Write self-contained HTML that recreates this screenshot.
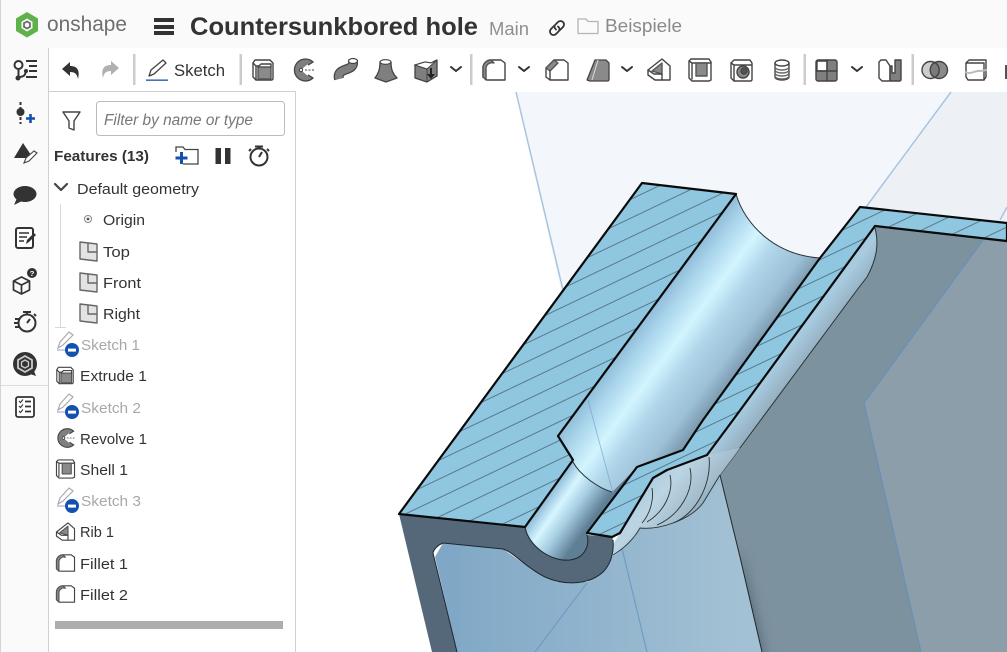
<!DOCTYPE html>
<html><head><meta charset="utf-8"><title>Countersunkbored hole</title>
<style>
html,body{margin:0;padding:0;background:#fff;width:1007px;height:652px;overflow:hidden}
svg{display:block;position:absolute;left:0;top:0;filter:blur(.3px)}
text{font-family:"Liberation Sans",sans-serif;fill:#333}
.f{font-size:15px}
.g{fill:#a8a8a8}
.ic{fill:none;stroke:#444;stroke-width:1.4;stroke-linejoin:round;stroke-linecap:round}
</style></head><body>
<svg width="1007" height="652" viewBox="0 0 1007 652" xmlns="http://www.w3.org/2000/svg">
<defs>
<filter id="soft" x="-100%" y="-30%" width="300%" height="160%"><feGaussianBlur stdDeviation="7"/></filter>
<pattern id="hatch" width="60" height="17" patternUnits="userSpaceOnUse" patternTransform="translate(400 516) rotate(-25.5)">
<rect width="60" height="17" fill="#8fc6e0"/><line x1="0" y1="0.5" x2="60" y2="0.5" stroke="#47606e" stroke-width=".8"/>
</pattern>
<linearGradient id="big" gradientUnits="userSpaceOnUse" x1="736" y1="194" x2="821" y2="257">
<stop offset="0" stop-color="#8fbcd8"/><stop offset=".14" stop-color="#a8d3ea"/><stop offset=".38" stop-color="#d2f5ff"/><stop offset=".58" stop-color="#b0d6ea"/><stop offset=".85" stop-color="#9cc0d6"/><stop offset="1" stop-color="#7f9eb4"/>
</linearGradient>
<linearGradient id="small" gradientUnits="userSpaceOnUse" x1="573" y1="460" x2="614" y2="489">
<stop offset="0" stop-color="#8fbcd8"/><stop offset=".3" stop-color="#d6f6ff"/><stop offset=".6" stop-color="#a6cde2"/><stop offset="1" stop-color="#5f7f95"/>
</linearGradient>
<linearGradient id="fil" gradientUnits="userSpaceOnUse" x1="790" y1="300" x2="835" y2="335">
<stop offset="0" stop-color="#9cc2da"/><stop offset=".5" stop-color="#a8cbe0"/><stop offset="1" stop-color="#8ea6b6"/>
</linearGradient>
<linearGradient id="ring" gradientUnits="userSpaceOnUse" x1="640" y1="470" x2="700" y2="520">
<stop offset="0" stop-color="#a3c7de"/><stop offset=".4" stop-color="#bcd5e3"/><stop offset=".8" stop-color="#a3bccc"/><stop offset="1" stop-color="#7d98ab"/>
</linearGradient>
<linearGradient id="inner" gradientUnits="userSpaceOnUse" x1="450" y1="600" x2="740" y2="600">
<stop offset="0" stop-color="#80a8c6"/><stop offset=".5" stop-color="#91b4cd"/><stop offset="1" stop-color="#a3c1d4"/>
</linearGradient>

<g id="iExtrude" class="ic"><path d="M-10 -7l2-3h15l3 3v16l-1 1h-16l-3-3z"/><path d="M-10 -7l3 3v14M-7 -4h3"/><rect x="-5" y="-3" width="13" height="12" fill="#8a8a8a" stroke="#555"/><path d="M-5-3l3-3h10v3" /></g>
<g id="iRevolve"><path d="M9-8A11 11 0 1 0 9 8L1 3-3 0 1-3z" fill="#7f7f7f" stroke="#444" stroke-width="1.3"/><circle cx="-3" cy="0" r="1.6" fill="#fff" stroke="#444"/><path d="M-1 -1l5-4M-1 1l5 4M2 0h9" stroke="#fff" stroke-width="1.6"/><path d="M1 0h9" stroke="#444" stroke-dasharray="2 1.5"/></g>
<g id="iFillet" class="ic"><path d="M-11-3a8 8 0 0 1 8-7h10l4 3v17h-18l-4-3z" fill="#fff"/><path d="M-11-3a8 8 0 0 1 8-7l3 3a6 6 0 0 0-8 5v12l-3-3z" fill="#8a8a8a" stroke="#555"/></g>
<g id="iChamfer" class="ic"><path d="M-11-2l8-8h10l4 3v17h-18l-4-3z" fill="#fff"/><path d="M-11-2l8-8 4 3-8 8z" fill="#8a8a8a" stroke="#555"/><path d="M-7 1v9"/></g>
<g id="iShell" class="ic"><path d="M-11-9l2-2h18l2 3v18l-2 1h-17l-3-3z" fill="#fff"/><path d="M-11-9l3 2v16M-8-7h19"/><path d="M-4-7h11v13h-11z" fill="#8a8a8a" stroke="#555"/></g>
<g id="iRib" class="ic"><path d="M-11 0L3-11l8 7V10H-4l-7-5z" fill="#fff"/><path d="M-7 1L3-7V4z" fill="#8a8a8a" stroke="#555"/><path d="M-11 0l6 4h8v6"/></g>
<g id="iPlane" class="ic" style="stroke:#666"><path d="M-9-9l17 2v17l-17-2z" fill="#e3e3e3"/><path d="M-1-8V1h9" /></g>
<g id="iSketchOff">
 <path d="M-9 7l2-6 9-10 4 3-10 10z" fill="#fff" stroke="#aaa" stroke-width="1.2"/><line x1="-10" y1="9" x2="3" y2="9" stroke="#9db4da" stroke-width="1.2"/>
 <circle cx="5" cy="9" r="7" fill="#1450b0"/><rect x="1" y="7.6" width="8" height="3" fill="#fff"/>
</g>
</defs>

<rect width="1007" height="48" fill="#fafafa"/>
<rect x="0" y="48" width="49" height="604" fill="#fafafa"/>
<rect x="0" y="0" width="1" height="652" fill="#d4d4d4"/>
<rect x="48" y="48" width="1" height="604" fill="#d0d0d0"/>
<rect x="1" y="385" width="47" height="1" fill="#dcdcdc"/>

<!-- logo -->
<path d="M27 12L38 18.500V31L27 37.500 16 31V18.500z" fill="#5fb14a"/>
<path d="M27 18.500l5.500 3.200v6.400L27 31.500l-5.500-3.400v-6.400z" fill="#fafafa"/>
<path d="M27 21.500l3 1.700v3.600L27 28.500l-3-1.700v-3.600z" fill="none" stroke="#6d6d6d" stroke-width="1.800"/>
<text x="47" y="31" font-size="21" textLength="80" lengthAdjust="spacingAndGlyphs" style="fill:#6e6e6e">onshape</text>

<path d="M154 18h20v4h-20zM154 25h20v4h-20zM154 31h20v4h-20z" fill="#333"/>
<text x="190" y="35" font-size="25" font-weight="700" textLength="288" lengthAdjust="spacingAndGlyphs">Countersunkbored hole</text>
<text x="489" y="35" font-size="18" textLength="40" lengthAdjust="spacingAndGlyphs" style="fill:#8f8f8f">Main</text>
<g fill="none" stroke="#333" stroke-width="1.800" stroke-linecap="round"><path d="M554 26l-3 3a3.500 3.500 0 0 0 5 5l3-3a3.500 3.500 0 0 0-1-4.500"/><path d="M560 30l3-3a3.500 3.500 0 0 0-5-5l-3 3a3.500 3.500 0 0 0 1 4.500"/></g>
<path d="M578 33.500V19h8l2 2.500h10V33.500z" fill="none" stroke="#b4b4b4" stroke-width="1.300"/>
<text x="605" y="32" font-size="18" textLength="77" lengthAdjust="spacingAndGlyphs" style="fill:#8a8a8a">Beispiele</text>

<!-- toolbar -->
<path d="M62 69l8-7v4c8 0 10 5 8 13-1-5-3-7-8-7v4z" fill="#333"/>
<path d="M119 68l-8-7v4c-8 0-10 5-8 13 1-5 3-7 8-7v4z" fill="#b0b0b0"/>
<g fill="#ccc"><rect x="133" y="54" width="2.500" height="31"/><rect x="239.500" y="54" width="2.500" height="31"/><rect x="470" y="54" width="2.500" height="31"/><rect x="803.500" y="54" width="2.500" height="31"/><rect x="911.500" y="54" width="2.500" height="31"/></g>
<path d="M149 76l2-6 12-10 3 3-12 11z" fill="#fff" stroke="#444" stroke-width="1.300" stroke-linejoin="round"/><path d="M149 76l3-1" stroke="#444"/>
<rect x="146" y="79.500" width="22" height="1.300" fill="#1450b0"/>
<text x="174" y="76" font-size="16.500" textLength="51" lengthAdjust="spacingAndGlyphs">Sketch</text>

<use href="#iExtrude" x="263" y="70"/>
<use href="#iRevolve" x="304" y="70"/>
<path d="M339 79c-3-12 15-7 14-17" fill="none" stroke="#444" stroke-width="10" stroke-linecap="butt"/>
<path d="M339 79c-3-12 15-7 14-17" fill="none" stroke="#7f7f7f" stroke-width="7.500"/>
<ellipse cx="353" cy="61" rx="4.500" ry="2.500" fill="#fff" stroke="#444" stroke-width="1.200"/>
<path d="M380 62C380 70 378 74 375 78L386 82 397 78C393 74 391 70 391 62z" fill="#7f7f7f" stroke="#444" stroke-width="1.300" stroke-linejoin="round"/><ellipse cx="385.500" cy="62" rx="5.500" ry="2.300" fill="#fff" stroke="#444" stroke-width="1.200"/>
<path d="M415 65l10-3 6 1 6-3v16l-10 6-12-4z" fill="#7f7f7f" stroke="#444" stroke-width="1.300" stroke-linejoin="round"/><path d="M415 65l12 4v13" fill="none" stroke="#444"/><path d="M415 65l10-3 6 1 6-3-10 9z" fill="#fff" stroke="#444" stroke-width="1"/><path d="M430 68v6h-3l4 5 4-5h-3v-6z" fill="#222"/>
<g fill="none" stroke="#333" stroke-width="2" stroke-linecap="round" stroke-linejoin="round"><path d="M451 67l5 4 5-4"/><path d="M519 67l5 4 5-4"/><path d="M622 67l5 4 5-4"/><path d="M852 67l5 4 5-4"/></g>
<use href="#iFillet" x="494" y="70"/>
<use href="#iChamfer" x="557" y="70"/>
<path d="M587 80l8-20h11l3 3v17l-1 1h-18z" fill="#8a8a8a" stroke="#444" stroke-width="1.300" stroke-linejoin="round"/><path d="M592 80l6-20" stroke="#ddd" fill="none"/>
<use href="#iRib" x="659" y="70"/>
<use href="#iShell" x="700" y="70"/>
<g class="ic"><path d="M731 63l3-3h16l2 3v17l-1 1h-17l-3-3z" fill="#fff"/><path d="M731 63l3 2v16M734 65h18"/><circle cx="743" cy="72" r="6" fill="#8a8a8a"/><circle cx="744" cy="71" r="3" fill="#555"/></g>
<g class="ic"><path d="M775 63v14a7 3 0 0 0 14 0V63"/><ellipse cx="782" cy="63" rx="7" ry="3" fill="#fff"/><path d="M775 67a7 3 0 0 0 14 0M775 70a7 3 0 0 0 14 0M775 73a7 3 0 0 0 14 0M775 76a7 3 0 0 0 14 0" stroke="#666"/></g>
<g class="ic"><rect x="816" y="60" width="21" height="21" rx="2" fill="#7f7f7f"/><rect x="817" y="61" width="10" height="10" fill="#fff"/><path d="M827 60v21M816 71h21"/></g>
<g class="ic"><path d="M879 62l2-2h5l4 6v14l-1 1h-7l-3-3z" fill="#fff"/><path d="M890 66l2 0v7l3 0V60h6v20l-1 1h-10z" fill="#7f7f7f"/></g>
<g class="ic"><circle cx="930.500" cy="70" r="8.500" fill="#ccc"/><circle cx="939" cy="70" r="8.500" fill="#8a8a8a"/><path d="M934.700 62.500a8.500 8.500 0 0 1 0 15 8.500 8.500 0 0 1 0-15z" fill="#7a7a7a"/></g>
<g class="ic"><path d="M966 63l3-3h17v17l-2 3h-16l-2-3z" fill="#fff"/><path d="M966 63h18v17"/></g>
<path d="M965 72c6 3 10-2 15-1l7-1" fill="none" stroke="#bbb" stroke-width="2"/>
<rect x="1005" y="65" width="2" height="14" fill="#555"/>

<!-- viewport -->
<rect x="296" y="92" width="711" height="560" fill="#fff"/>
<path d="M516 92H1007V300L563 300z" fill="#f3f7fb"/>
<path d="M951 92H1007V260H827z" fill="#edf1f6"/>
<path d="M516 92L563 290" stroke="#a9c4de" stroke-width="1.500" fill="none"/>
<path d="M951 92L866 207" stroke="#a9c4de" stroke-width="1.500" fill="none"/>
<path d="M1007 207L1000 220" stroke="#a9c4de" stroke-width="1.500" fill="none"/>

<!-- grey wall -->
<path d="M875 226L1007 241V652H750L720 475 760 420 857 290z" fill="#7d929f"/>
<path d="M738 545L764 660H735z" fill="#4f6372" filter="url(#soft)"/>
<path d="M983 240L1007 243V652H921L864 403z" fill="#8c9eaa"/>
<path d="M983 240L864 403 921 652" fill="none" stroke="#6a90b8" stroke-width="1.300"/>
<!-- interior -->
<path d="M435 557L443 543 503 549 523 563 557 582 587 582 607 567 613 555 640 528 673 523 703 503 720 475 740 557 762 652H457z" fill="url(#inner)"/>
<path d="M587 583L535 652M620 540L647 652" stroke="#6f9cc6" stroke-width="1.200" fill="none"/>
<path d="M720 475L740 557 762 652" fill="none" stroke="#22282c" stroke-width="1"/>
<!-- strip fillet -->
<path d="M875 226C878 240 879 255 867 277L857 290 760 420 720 475 703 503 690 460 733 420z" fill="url(#fil)"/>
<path d="M875 228C878 240 879 255 867 277L857 290 720 475" fill="none" stroke="#2b3237" stroke-width="1"/>
<!-- rings -->
<path d="M707 455L667 470 653 478 620 533 613 545 612 557C625 548 635 535 640 528 660 530 690 520 703 503L720 475 740 448z" fill="url(#ring)"/>
<path d="M613 555C628 546 636 535 640 528 660 530 690 520 703 503L720 475" fill="none" stroke="#2b3237" stroke-width=".9"/>
<g fill="none" stroke="#2b3237" stroke-width=".9"><path d="M652 488C654 500 650 514 642 523"/><path d="M670 475C674 492 664 512 647 522"/><path d="M690 468C695 490 680 515 657 525"/><path d="M709 457C712 485 695 515 673 523"/></g>
<!-- front dark face -->
<path d="M399 514L525 527C528 545 550 562 570 560 585 558 590 545 587 535L612 537 613 540C614 550 612 562 604 571 590 585 565 586 545 577 525 567 515 553 503 549L443 543C438 545 434 549 433 553L457 652H432z" fill="#54687a"/>
<path d="M457 652L433 553C434 549 438 545 443 543L503 549C515 553 525 567 545 577 565 586 590 585 604 571 612 562 614 550 613 540" fill="none" stroke="#1f272e" stroke-width="1"/>
<!-- small groove -->
<path d="M573 460L525 527C528 545 550 562 570 560 585 558 590 545 587 535L637 467 612 492C598 488 580 475 573 460z" fill="url(#small)"/>
<path d="M525 527C528 545 550 562 570 560 585 558 590 545 587 535" fill="none" stroke="#1f272e" stroke-width="1"/>
<!-- big groove -->
<path d="M736 194C745 225 775 255 820 258L703 420 683 450 637 467 612 492C598 488 580 475 573 460L558 436z" fill="url(#big)"/>
<path d="M736 194C745 225 775 255 820 258M573 462C580 475 598 488 612 492" fill="none" stroke="#2b3237" stroke-width="1"/>
<path d="M588 400L613 493" stroke="#6f9cc6" stroke-width="1" opacity=".6" fill="none"/>
<!-- hatched caps -->
<path d="M642 183L736 194 558 436 573 460 525 527 399 514z" fill="url(#hatch)" stroke="#0a0a0a" stroke-width="2.200" stroke-linejoin="round"/>
<path d="M860 207L1007 223V241L875 226 733 420 707 455 667 470 653 478 620 533 612 537 587 533 637 467 683 450 703 420 820 258z" fill="url(#hatch)" stroke="#0a0a0a" stroke-width="2.200" stroke-linejoin="round"/>

<!-- panel -->
<rect x="49" y="91" width="247" height="561" fill="#fff"/>
<rect x="49" y="91" width="247" height="1" fill="#d0d0d0"/>
<rect x="295" y="91" width="1" height="561" fill="#d0d0d0"/>
<path d="M63 112H80L74 121V130L69 128V121z" fill="none" stroke="#444" stroke-width="1.400" stroke-linejoin="round"/>
<rect x="96.500" y="101.500" width="188" height="34" rx="3" fill="#fff" stroke="#bbb"/>
<text x="104" y="125" font-size="15.500" font-style="italic" textLength="149" lengthAdjust="spacingAndGlyphs" style="fill:#777">Filter by name or type</text>
<text x="54" y="161" font-size="15" font-weight="700" textLength="95" lengthAdjust="spacingAndGlyphs">Features (13)</text>
<path d="M176 152v-5h7l2 2.500h13V164h-15" fill="none" stroke="#444" stroke-width="1.300"/>
<path d="M180 152h3v4.500h4.500v3H183V164h-3v-4.500h-4.500v-3H180z" fill="#1450b0"/>
<rect x="215.500" y="148" width="5.500" height="16" fill="#333"/><rect x="225" y="148" width="5.500" height="16" fill="#333"/>
<g fill="none" stroke="#333" stroke-width="2"><circle cx="259" cy="157" r="8.500"/><path d="M255 146.500h8M259 147v2M259 157l3-5M251 149l-2 2M267 149l2 2"/></g>

<path d="M55 184l6 6 6-6" fill="none" stroke="#444" stroke-width="2.200" stroke-linecap="round" stroke-linejoin="round"/>
<text x="77" y="194" class="f" textLength="122" lengthAdjust="spacingAndGlyphs">Default geometry</text>
<path d="M60.500 204V327M55 327.500H66" stroke="#d8d8d8" stroke-width="1" fill="none"/>
<circle cx="88" cy="219" r="3.500" fill="none" stroke="#888"/><circle cx="88" cy="219" r="1.400" fill="#555"/>
<text x="103" y="225" class="f" textLength="42" lengthAdjust="spacingAndGlyphs">Origin</text>
<use href="#iPlane" x="89" y="251"/><text x="103" y="257" class="f" textLength="27" lengthAdjust="spacingAndGlyphs">Top</text>
<use href="#iPlane" x="89" y="282"/><text x="103" y="288" class="f" textLength="38" lengthAdjust="spacingAndGlyphs">Front</text>
<use href="#iPlane" x="89" y="313"/><text x="103" y="319" class="f" textLength="37" lengthAdjust="spacingAndGlyphs">Right</text>

<use href="#iSketchOff" x="67" y="341"/><text x="81" y="350" class="f g" textLength="59" lengthAdjust="spacingAndGlyphs">Sketch 1</text>
<use href="#iExtrude" transform="translate(65 375.500) scale(.82)"/><text x="80" y="381" class="f" textLength="67" lengthAdjust="spacingAndGlyphs">Extrude 1</text>
<use href="#iSketchOff" x="67" y="403"/><text x="81" y="413" class="f g" textLength="60" lengthAdjust="spacingAndGlyphs">Sketch 2</text>
<use href="#iRevolve" transform="translate(66 438) scale(.85)"/><text x="80" y="444" class="f" textLength="67" lengthAdjust="spacingAndGlyphs">Revolve 1</text>
<use href="#iShell" transform="translate(65.500 469) scale(.82)"/><text x="80" y="475" class="f" textLength="48" lengthAdjust="spacingAndGlyphs">Shell 1</text>
<use href="#iSketchOff" x="67" y="497"/><text x="81" y="506" class="f g" textLength="60" lengthAdjust="spacingAndGlyphs">Sketch 3</text>
<use href="#iRib" transform="translate(65.500 532) scale(.82)"/><text x="80" y="537" class="f" textLength="34" lengthAdjust="spacingAndGlyphs">Rib 1</text>
<use href="#iFillet" transform="translate(65.500 563) scale(.82)"/><text x="80" y="569" class="f" textLength="48" lengthAdjust="spacingAndGlyphs">Fillet 1</text>
<use href="#iFillet" transform="translate(65.500 594) scale(.82)"/><text x="80" y="600" class="f" textLength="48" lengthAdjust="spacingAndGlyphs">Fillet 2</text>
<rect x="55" y="621" width="228" height="8" fill="#adadad"/>

<!-- rail icons -->
<g fill="none" stroke="#333" stroke-width="2"><circle cx="18.500" cy="65" r="4"/><path d="M18.500 69V78M18.500 77c5 0 7-2 7-5"/><path d="M26 61h11M29 66h8M29 71h8M26 77h11"/></g>
<circle cx="18" cy="78" r="2.500" fill="#333"/><circle cx="26" cy="71" r="2" fill="#333"/>
<path d="M20.500 102v22" stroke="#333" stroke-width="2" stroke-dasharray="3 2"/><circle cx="20.500" cy="112" r="4" fill="#333"/>
<path d="M26 118.500h9M30.500 114v9" stroke="#1450b0" stroke-width="2.600"/>
<path d="M14 158L23 143 33 158z" fill="#333"/><path d="M24 163l2-5 8-7 3 2-8 8z" fill="#fff" stroke="#444" stroke-width="1.100"/>
<ellipse cx="25" cy="194" rx="11.500" ry="8" fill="#333"/><path d="M17 198l-3 7 8-4z" fill="#333"/>
<rect x="16" y="228" width="17" height="20" rx="2" fill="#fff" stroke="#333" stroke-width="2"/><path d="M19 233h10M19 237h8M19 241h5" stroke="#333" stroke-width="1.600"/><path d="M26 244l1-4 7-7 2 2-7 7z" fill="#333"/>
<g fill="none" stroke="#333" stroke-width="1.700" stroke-linejoin="round"><path d="M13.500 281l8-4 8 4v9l-8 4-8-4z" fill="#fafafa"/><path d="M13.500 281l8 4 8-4M21.500 285v9"/></g>
<circle cx="32" cy="273" r="5" fill="#333"/><text x="29.800" y="276" font-size="7.500" font-weight="700" style="fill:#fff">?</text>
<g fill="none" stroke="#333" stroke-width="2"><circle cx="27" cy="323" r="8.500"/><path d="M23 312h8M27 312.500v2M27 323l3-4M15 319h5M14 323h5M15 327h5M34 314l2 2"/></g>
<circle cx="25" cy="364" r="12" fill="#333"/><path d="M30 374l6 2-2-5z" fill="#333"/><path d="M25 356l7 4v8l-7 4-7-4v-8z" fill="none" stroke="#ccc" stroke-width="1.800"/><path d="M25 360l3.500 2v4l-3.500 2-3.500-2v-4z" fill="none" stroke="#ccc" stroke-width="1.300"/>
<rect x="16" y="397" width="18" height="20" rx="2" fill="#fff" stroke="#333" stroke-width="1.800"/><path d="M19 401l1.500 1.500 2.500-3M19 406l1.500 1.500 2.500-3M19 411l1.500 1.500 2.500-3" fill="none" stroke="#333" stroke-width="1.100"/><path d="M25 401.500h6M25 406.500h6M25 411.500h6" stroke="#333" stroke-width="1.800"/>
</svg>
</body></html>
